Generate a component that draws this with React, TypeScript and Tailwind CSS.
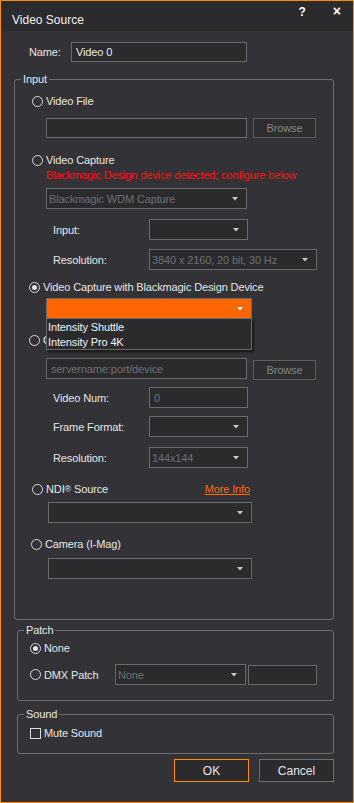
import React from 'react';

const FONT = "font-['Liberation_Sans',Arial,sans-serif]";

const Radio = ({ checked = false }: { checked?: boolean }) => (
  <span className="w-[11px] h-[11px] shrink-0 rounded-full border border-[#dcdcdc] flex items-center justify-center">
    {checked && <span className="w-[5px] h-[5px] rounded-full bg-[#e6e6e6]" />}
  </span>
);

const Arrow = ({ color = '#c8c8c8' }: { color?: string }) => (
  <svg width="6" height="4" viewBox="0 0 6 4" className="shrink-0">
    <polygon points="0,0 6,0 3,3.5" fill={color} />
  </svg>
);

const Combo = ({ className = '', text = '', textClass = 'text-[#6f6f6f]' }: { className?: string; text?: string; textClass?: string }) => (
  <div className={`h-[21px] border border-[#6a6a6a] bg-[#2b2b2e] flex items-center justify-between pl-[2px] pr-[8px] ${className}`}>
    <span className={`truncate ${textClass}`}>{text}</span>
    <Arrow />
  </div>
);

const TextBox = ({ className = '', text = '', textClass = 'text-[#6f6f6f]' }: { className?: string; text?: string; textClass?: string }) => (
  <div className={`h-[20px] border border-[#6a6a6a] bg-[#2b2b2e] flex items-center pl-[4px] ${className}`}>
    <span className={textClass}>{text}</span>
  </div>
);

const Browse = ({ className = '' }: { className?: string }) => (
  <div className={`w-[63px] h-[20px] border border-[#5e5e5e] bg-[#2e2e31] flex items-center justify-center text-[#858585] ${className}`}>
    Browse
  </div>
);

const RadioRow = ({ label, checked = false, className = '' }: { label: string; checked?: boolean; className?: string }) => (
  <div className={`h-[14px] flex items-center gap-[3px] ${className}`}>
    <Radio checked={checked} />
    <span>{label}</span>
  </div>
);

const FieldRow = ({ label, children, className = '' }: { label: string; children: React.ReactNode; className?: string }) => (
  <div className={`flex items-center ${className}`}>
    <span className="ml-[38px] w-[96px]">{label}</span>
    {children}
  </div>
);

export default function App() {
  return (
    <div className={`w-[354px] h-[803px] border border-[#ff8c00] bg-[#333337] flex flex-col text-[11px] leading-[14px] tracking-[-0.13px] text-[#e6e6e6] ${FONT}`}>
      {/* title bar */}
      <div className="h-[30px] shrink-0 bg-[#2b2b2e] flex items-start tracking-normal">
        <span className="ml-[11px] mt-[12px] text-[12px] text-[#f0f0f0]">Video Source</span>
        <span className="ml-auto mt-[4px] text-[12px] font-bold text-white">?</span>
        <span className="ml-[27px] mr-[12px] mt-[3px] text-[14px] font-bold text-white">×</span>
      </div>

      {/* name */}
      <div className="mt-[11px] h-[20px] flex items-center">
        <span className="ml-[28px] w-[42px]">Name:</span>
        <TextBox className="w-[176px]" text="Video 0" textClass="text-[#ececec]" />
      </div>

      {/* input group */}
      <fieldset className="mt-[11px] ml-[13px] w-[320px] h-[547px] border border-[#6e6e6e] rounded-[3px]">
        <legend className="ml-[6px] px-[2px] leading-[13px]">Input</legend>
        <div className="flex flex-col">
          <RadioRow label="Video File" className="mt-[8px] ml-[17px]" />
          <div className="mt-[10px] ml-[31px] flex items-center gap-[6px]">
            <TextBox className="w-[201px]" />
            <Browse />
          </div>

          <RadioRow label="Video Capture" className="mt-[15px] ml-[17px]" />
          <span className="mt-[1px] ml-[31px] text-[#ff1010]">Blackmagic Design device detected; configure below</span>
          <Combo className="mt-[6px] ml-[31px] w-[201px]" text="Blackmagic WDM Capture" />
          <FieldRow label="Input:" className="mt-[10px]">
            <Combo className="w-[99px]" />
          </FieldRow>
          <FieldRow label="Resolution:" className="mt-[9px]">
            <Combo className="w-[168px]" text="3840 x 2160, 20 bit, 30 Hz" />
          </FieldRow>

          <RadioRow label="Video Capture with Blackmagic Design Device" checked className="mt-[10px] ml-[14px]" />
          <div className="relative mt-[4px] ml-[31px] w-[206px] z-10">
            <div className="h-[21px] border border-[#6a6a6a] bg-[#ff6600] flex items-center justify-end pr-[8px]">
              <Arrow color="#ffffff" />
            </div>
            {/* open dropdown list, lies over the next option */}
            <div className="absolute left-0 top-full w-[206px] border-x border-b border-[#6a6a6a] bg-[#2b2b2e] shadow-[2px_2px_2px_rgba(0,0,0,0.55)] text-[#f2f2f2]">
              <div className="h-[15px] flex items-center pl-[1px]">Intensity Shuttle</div>
              <div className="h-[15px] flex items-center pl-[1px]">Intensity Pro 4K</div>
            </div>
          </div>

          <RadioRow label="O" className="mt-[14px] ml-[14px]" />
          <div className="mt-[11px] ml-[31px] flex items-start gap-[6px]">
            <TextBox className="w-[201px] h-[21px]" text="servername:port/device" />
            <Browse className="mt-[2px]" />
          </div>
          <FieldRow label="Video Num:" className="mt-[7px]">
            <TextBox className="w-[99px] h-[21px]" text="0" />
          </FieldRow>
          <FieldRow label="Frame Format:" className="mt-[8px]">
            <Combo className="w-[99px]" />
          </FieldRow>
          <FieldRow label="Resolution:" className="mt-[10px]">
            <Combo className="w-[99px]" text="144x144" />
          </FieldRow>

          <div className="mt-[14px] ml-[17px] h-[14px] flex items-center">
            <Radio />
            <span className="ml-[3px]">
              NDI<sup className="text-[9px] relative -top-[1px]">®</sup> Source
            </span>
            <span className="ml-auto mr-[83px] text-[#ff6a10] underline">More Info</span>
          </div>
          <Combo className="mt-[6px] ml-[33px] w-[204px]" />

          <RadioRow label="Camera (I-Mag)" className="mt-[14px] ml-[16px]" />
          <Combo className="mt-[7px] ml-[33px] w-[204px]" />
        </div>
      </fieldset>

      {/* patch group */}
      <fieldset className="mt-[4px] ml-[16px] w-[317px] h-[77px] border border-[#6e6e6e] rounded-[3px]">
        <legend className="ml-[6px] px-[2px] leading-[13px]">Patch</legend>
        <div className="flex flex-col">
          <RadioRow label="None" checked className="mt-[4px] ml-[12px]" />
          <div className="mt-[9px] flex items-center">
            <RadioRow label="DMX Patch" className="ml-[12px] w-[85px]" />
            <Combo className="w-[131px] h-[20px]" text="None" />
            <TextBox className="ml-[2px] w-[69px] h-[19px]" />
          </div>
        </div>
      </fieldset>

      {/* sound group */}
      <fieldset className="mt-[7px] ml-[16px] w-[317px] h-[46px] border border-[#6e6e6e] rounded-[3px]">
        <legend className="ml-[6px] px-[2px] leading-[13px]">Sound</legend>
        <div className="mt-[5px] ml-[12px] h-[14px] flex items-center gap-[3px]">
          <span className="w-[11px] h-[11px] border border-[#dcdcdc]" />
          <span>Mute Sound</span>
        </div>
      </fieldset>

      {/* buttons */}
      <div className="mt-[5px] mr-[19px] flex justify-end gap-[10px] tracking-normal">
        <div className="w-[75px] h-[23px] border border-[#ff8c00] bg-[#2b2b2e] flex items-center justify-center text-[12px]">OK</div>
        <div className="w-[75px] h-[23px] border border-[#6e6e6e] bg-[#2b2b2e] flex items-center justify-center text-[12px]">Cancel</div>
      </div>
    </div>
  );
}
